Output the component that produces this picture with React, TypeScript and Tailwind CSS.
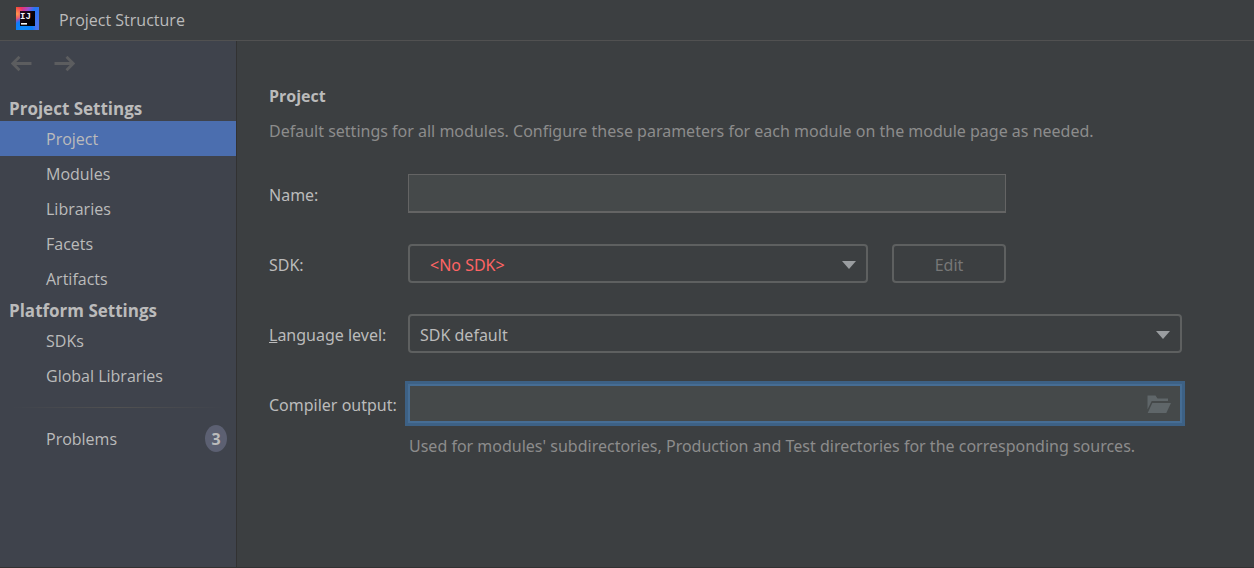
import { useState } from "react";
import type { ReactNode } from "react";
import clsx from "clsx";

const projectSettings = ["Project", "Modules", "Libraries", "Facets", "Artifacts"];
const platformSettings = ["SDKs", "Global Libraries"];

const Logo = () => (
  <svg width="23" height="23" viewBox="0 0 23 23" aria-hidden="true">
    <defs>
      <linearGradient id="ij-base" x1="0" y1="0" x2="1" y2="0.6">
        <stop offset="0" stopColor="#f4512c" />
        <stop offset="0.2" stopColor="#f0306b" />
        <stop offset="0.42" stopColor="#a04fd0" />
        <stop offset="0.62" stopColor="#2477f5" />
        <stop offset="1" stopColor="#4a74ee" />
      </linearGradient>
      <radialGradient id="ij-orange" cx="0.05" cy="0.3" r="0.3">
        <stop offset="0" stopColor="#ff9a4a" />
        <stop offset="1" stopColor="#ff9a4a" stopOpacity="0" />
      </radialGradient>
      <radialGradient id="ij-blue" cx="0.3" cy="1.05" r="0.6">
        <stop offset="0" stopColor="#0d8bf8" />
        <stop offset="0.7" stopColor="#0d7df8" />
        <stop offset="1" stopColor="#0d7df8" stopOpacity="0" />
      </radialGradient>
      <linearGradient id="ij-inner" x1="0" y1="0" x2="1" y2="1">
        <stop offset="0" stopColor="#2b0a26" />
        <stop offset="0.5" stopColor="#0a0208" />
        <stop offset="1" stopColor="#000000" />
      </linearGradient>
    </defs>
    <rect width="23" height="23" fill="url(#ij-base)" />
    <rect width="23" height="23" fill="url(#ij-orange)" />
    <rect width="23" height="23" fill="url(#ij-blue)" />
    <rect x="4" y="4" width="15" height="15" fill="url(#ij-inner)" />
    <text
      x="4"
      y="12"
      fill="#f4f4f4"
      fontFamily="'Liberation Mono', monospace"
      fontSize="9"
      fontWeight="700"
    >
      IJ
    </text>
    <rect x="5" y="16" width="6" height="1.6" fill="#f4f4f4" />
  </svg>
);

const ArrowIcon = ({ flip = false }: { flip?: boolean }) => (
  <svg
    width="21"
    height="16"
    viewBox="0 0 21 16"
    fill="none"
    stroke="#5c5d5f"
    strokeWidth="2.8"
    className={clsx(flip && "-scale-x-100")}
    aria-hidden="true"
  >
    <path d="M20.5 7.5H2M8.5 .8L1.8 7.5l6.7 6.7" />
  </svg>
);

const FolderIcon = () => (
  <svg width="24" height="18" viewBox="0 0 24 18" fill="#5f6669" aria-hidden="true">
    <path d="M.5.5h8l2 3H21v2.6H4.7L.5 14.5z" />
    <path d="M5.3 7.9H24L19.3 18H.7z" />
  </svg>
);

const SidebarItem = ({
  label,
  selected,
  onSelect,
  children,
}: {
  label: string;
  selected: boolean;
  onSelect: (label: string) => void;
  children?: ReactNode;
}) => (
  <button
    type="button"
    onClick={() => onSelect(label)}
    className={clsx(
      "flex h-[35px] w-full items-center justify-between pl-[46px] pr-[9px] text-left",
      selected && "bg-[#4b6eaf]"
    )}
  >
    <span>{label}</span>
    {children}
  </button>
);

const ComboBox = ({
  id,
  value,
  className,
}: {
  id: string;
  value: string;
  className?: string;
}) => (
  <div className="relative flex-1">
    <select
      id={id}
      className={clsx(
        "h-[39px] w-full appearance-none rounded-[4px] border-2 border-[#5e6060] bg-[#3c3f41] pr-10 pt-[2px] outline-none",
        className
      )}
    >
      <option>{value}</option>
    </select>
    <svg
      width="14"
      height="8"
      viewBox="0 0 14 8"
      fill="#9a9da0"
      className="pointer-events-none absolute right-3 top-[17px]"
      aria-hidden="true"
    >
      <path d="M0 0h14L7 8z" />
    </svg>
  </div>
);

const FormRow = ({
  id,
  label,
  children,
}: {
  id: string;
  label: ReactNode;
  children: ReactNode;
}) => (
  <div className="flex items-center">
    <label htmlFor={id} className="w-[139px] shrink-0 whitespace-nowrap pt-[2px]">
      {label}
    </label>
    {children}
  </div>
);

const App = () => {
  const [selected, setSelected] = useState("Project");

  return (
    <div className="flex min-h-screen flex-col border-b border-[#323232] bg-[#3c3f41] font-['Open_Sans','Noto_Sans',sans-serif] text-[16px] leading-6 text-[#bbbbbb]">
      <header className="flex h-[41px] items-center gap-5 border-b border-[#515151] px-4 pb-1">
        <Logo />
        <h1 className="pt-[3px]">Project Structure</h1>
      </header>

      <div className="flex flex-1">
        <nav className="flex w-[237px] shrink-0 flex-col border-r border-[#323232] bg-[#3f434c]">
          <div className="flex gap-[22px] px-[11px] pb-[25px] pt-[15px]">
            <button type="button" aria-label="Back">
              <ArrowIcon />
            </button>
            <button type="button" aria-label="Forward">
              <ArrowIcon flip />
            </button>
          </div>

          <h2 className="px-[9px] text-[17px] leading-6 font-bold">Project Settings</h2>
          {projectSettings.map((item) => (
            <SidebarItem key={item} label={item} selected={selected === item} onSelect={setSelected} />
          ))}

          <h2 className="px-[9px] pt-[3px] text-[17px] leading-6 font-bold">Platform Settings</h2>
          {platformSettings.map((item) => (
            <SidebarItem key={item} label={item} selected={selected === item} onSelect={setSelected} />
          ))}

          <div className="mx-3 mb-[13px] mt-[14px] h-px bg-linear-to-r from-transparent via-[#515151] to-transparent" />

          <SidebarItem label="Problems" selected={selected === "Problems"} onSelect={setSelected}>
            <span className="flex h-[27px] w-[22px] items-center justify-center rounded-[50%] bg-[#5c6072] font-bold">
              3
            </span>
          </SidebarItem>
        </nav>

        <main className="flex-1 pl-8 pr-[72px] pt-[43px] font-['Noto_Sans','Open_Sans',sans-serif]">
          <h2 className="font-['Open_Sans','Noto_Sans',sans-serif] font-bold">Project</h2>
          <p className="mt-[11px] text-[#8c8c8c]">
            Default settings for all modules. Configure these parameters for each module on the module page as needed.
          </p>

          <form className="mt-[31px] flex flex-col gap-[31px]">
            <div className="flex flex-col gap-[31px] pr-44">
              <FormRow id="name" label="Name:">
                <input
                  id="name"
                  type="text"
                  className="h-[39px] flex-1 border border-b-2 border-[#646464] bg-[#45494a] px-2 outline-none"
                />
              </FormRow>
              <FormRow id="sdk" label="SDK:">
                <ComboBox id="sdk" value="<No SDK>" className="pl-5 text-[#ff6464]" />
                <button
                  type="button"
                  disabled
                  className="ml-6 h-[39px] w-[114px] rounded-[4px] border-2 border-[#5e6060] pt-[2px] text-[#777777]"
                >
                  Edit
                </button>
              </FormRow>
            </div>

            <FormRow
              id="level"
              label={
                <>
                  <span className="underline">L</span>anguage level:
                </>
              }
            >
              <ComboBox id="level" value="SDK default" className="pl-[10px]" />
            </FormRow>

            <div>
              <FormRow id="output" label="Compiler output:">
                <div className="flex h-[39px] flex-1 items-center border-2 border-[#466d94] bg-[#45494a] pr-[9px] ring-3 ring-[#3d6185]">
                  <input id="output" type="text" className="h-full min-w-0 flex-1 px-2 outline-none" />
                  <button type="button" aria-label="Browse">
                    <FolderIcon />
                  </button>
                </div>
              </FormRow>
              <p className="ml-[139px] mt-[11px] pl-px text-[#8c8c8c]">
                Used for modules' subdirectories, Production and Test directories for the corresponding sources.
              </p>
            </div>
          </form>
        </main>
      </div>
    </div>
  );
};

export default App;
